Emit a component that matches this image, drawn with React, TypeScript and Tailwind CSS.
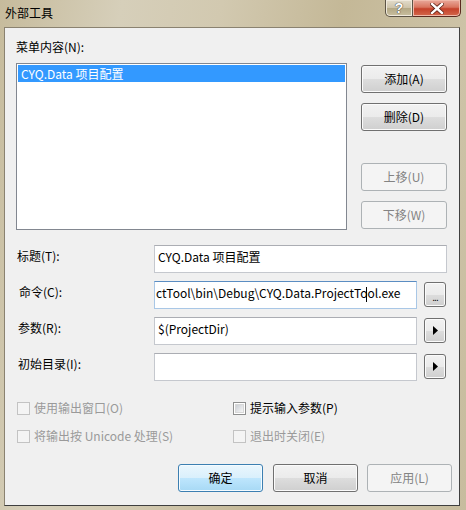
import React from 'react';

const btnBase =
  'h-[28px] rounded-[3px] border text-[12px] leading-[16px] flex items-center justify-center';
const btnNormal =
  'border-[#707070] text-black bg-[linear-gradient(#f2f2f2_0%,#ebebeb_50%,#dddddd_51%,#cfcfcf_100%)] shadow-[inset_0_0_0_1px_#fbfbfb]';
const btnDefault =
  'border-[#3c7fb1] text-black bg-[linear-gradient(#eaf6fd_0%,#d9f0fc_50%,#bee6fd_51%,#a7d9f5_100%)] shadow-[inset_0_0_0_1px_#f4fbff]';
const btnDisabled = 'border-[#adb2b5] text-[#838383] bg-[#f4f4f4]';

const Btn = ({
  label,
  kind = 'normal',
  className = 'w-[86px]',
}: {
  label: string;
  kind?: 'normal' | 'default' | 'disabled';
  className?: string;
}) => (
  <div
    className={`${btnBase} ${kind === 'default' ? btnDefault : kind === 'disabled' ? btnDisabled : btnNormal} ${className}`}
  >
    {label}
  </div>
);

const SmallBtn = ({ children }: { children: React.ReactNode }) => (
  <div className="ml-[7px] mt-[1px] w-[22px] h-[25px] rounded-[3px] border border-[#707070] bg-[linear-gradient(#f2f2f2_0%,#ebebeb_50%,#dddddd_51%,#cfcfcf_100%)] shadow-[inset_0_0_0_1px_#fbfbfb] flex items-center justify-center">
    {children}
  </div>
);

const Arrow = () => (
  <svg width="5" height="9" viewBox="0 0 5 9">
    <path d="M0 0 L5 4.5 L0 9 Z" fill="#000" />
  </svg>
);

const Check = ({ label, disabled }: { label: string; disabled?: boolean }) => (
  <div className="flex items-center h-[16px]">
    <div
      className={`w-[13px] h-[13px] border ${
        disabled ? 'border-[#c3c3c3] bg-[#f4f4f4]' : 'border-[#8e8f8f] bg-white p-px'
      }`}
    >
      {!disabled && (
        <div className="w-full h-full bg-[linear-gradient(135deg,#cbcfd5,#f6f6f6)] border border-[#d7d7d7]" />
      )}
    </div>
    <span className={`ml-[4px] leading-[16px] ${disabled ? 'text-[#9a9a9a]' : 'text-black'}`}>{label}</span>
  </div>
);

const inputCls =
  'h-[28px] bg-white border border-[#c5c8ce] border-t-[#abadb3] pl-[3px] pt-[3px] leading-[16px] whitespace-nowrap overflow-hidden';

export default function App() {
  return (
    <div className="w-[466px] h-[510px] flex flex-col text-[12px] font-['Noto_Sans_CJK_SC','Microsoft_YaHei',sans-serif] bg-[linear-gradient(100deg,#c6bb9c_0%,#d6cfba_22%,#d2c9b0_40%,#c4b897_62%,#cdc3a7_85%,#c7bc9e_100%)]">
      {/* Title bar */}
      <div className="h-[27px] shrink-0 flex items-start">
        <span className="ml-[5px] mt-[5px] leading-[16px] text-black">外部工具</span>
        <div className="ml-auto mr-[5px] flex">
          <div className="w-[28px] h-[17px] rounded-bl-[5px] border border-t-0 border-[#5c5446] bg-[linear-gradient(#e3dccb_0%,#cdc3a9_50%,#b3a885_51%,#c9bf9f_100%)] shadow-[inset_0_0_0_1px_#efe9dc] flex items-center justify-center">
            <span className="text-white font-bold text-[14px] leading-[14px] font-['Liberation_Sans',sans-serif] [text-shadow:0_0_1px_#333,0_0_1px_#333]">?</span>
          </div>
          <div className="w-[48px] h-[17px] rounded-br-[5px] border border-l-0 border-t-0 border-[#5a2a1f] bg-[linear-gradient(#e9a99b_0%,#d9755f_45%,#c5412a_55%,#d3684c_100%)] shadow-[inset_0_0_0_1px_#f0b8a8] flex items-center justify-center">
            <svg width="14" height="11" viewBox="0 0 14 11">
              <path d="M2 1 L12 10 M12 1 L2 10" stroke="#5a1e12" strokeWidth="4" strokeLinecap="square" />
              <path d="M2 1 L12 10 M12 1 L2 10" stroke="#ffffff" strokeWidth="2.4" strokeLinecap="square" />
            </svg>
          </div>
        </div>
      </div>

      {/* Client area */}
      <div className="ml-[4px] w-[456px] h-[479px] border border-[#8a8270] border-r-[#3f3f3f] border-b-[#3f3f3f] bg-[#f0f0f0] flex flex-col text-black">
        {/* List and side buttons */}
        <div className="flex pl-[11px]">
          <div className="w-[331px] flex flex-col">
            <div className="mt-[11px] h-[16px] leading-[16px]">菜单内容(N):</div>
            <div className="mt-[8px] h-[167px] border border-[#828790] bg-white">
              <div className="mt-[1px] mx-[1px] h-[17px] bg-[#3399ff] text-white leading-[17px] pl-[3px]">
                CYQ.Data 项目配置
              </div>
            </div>
          </div>
          <div className="ml-[14px] pt-[37px] flex flex-col">
            <Btn label="添加(A)" />
            <Btn label="删除(D)" className="w-[86px] mt-[10px]" />
            <Btn label="上移(U)" kind="disabled" className="w-[86px] mt-[32px]" />
            <Btn label="下移(W)" kind="disabled" className="w-[86px] mt-[10px]" />
          </div>
        </div>

        {/* Form rows */}
        <div className="mt-[15px] flex flex-col gap-[8px] pl-[12px]">
          <div className="flex items-start h-[28px]">
            <span className="w-[137px] pt-[3px] leading-[16px]">标题(T):</span>
            <div className={`${inputCls} w-[293px]`}>CYQ.Data 项目配置</div>
          </div>
          <div className="flex items-start h-[28px]">
            <span className="w-[137px] pt-[3px] pl-[2px] leading-[16px]">命令(C):</span>
            <div className="h-[28px] w-[263px] bg-white border border-[#a9c7e6] border-t-[#5b8dc2] pl-[1px] pt-[3px] leading-[16px] whitespace-nowrap overflow-hidden">
              ctTool\bin\Debug\CYQ.Data.ProjectTo
              <span className="inline-block w-px h-[15px] bg-black align-middle -mr-px relative -left-[2px]" />
              ol.exe
            </div>
            <SmallBtn>
              <span className="leading-[10px] text-[10px] font-['Liberation_Sans',sans-serif] tracking-[-1px] mt-[6px]">...</span>
            </SmallBtn>
          </div>
          <div className="flex items-start h-[28px]">
            <span className="w-[137px] pt-[3px] pl-[1px] leading-[16px]">参数(R):</span>
            <div className={`${inputCls} w-[263px]`}>$(ProjectDir)</div>
            <SmallBtn>
              <Arrow />
            </SmallBtn>
          </div>
          <div className="flex items-start h-[28px]">
            <span className="w-[137px] pt-[3px] pl-[1px] leading-[16px]">初始目录(I):</span>
            <div className={`${inputCls} w-[263px]`}></div>
            <SmallBtn>
              <Arrow />
            </SmallBtn>
          </div>
        </div>

        {/* Checkboxes */}
        <div className="mt-[19px] pl-[12px] grid grid-cols-[216px_1fr] gap-y-[12px]">
          <Check label="使用输出窗口(O)" disabled />
          <Check label="提示输入参数(P)" />
          <Check label="将输出按 Unicode 处理(S)" disabled />
          <Check label="退出时关闭(E)" disabled />
        </div>

        {/* Dialog buttons */}
        <div className="mt-[20px] pr-[7px] flex justify-end">
          <Btn label="确定" kind="default" className="w-[85px]" />
          <Btn label="取消" className="w-[85px] ml-[10px]" />
          <Btn label="应用(L)" kind="disabled" className="w-[85px] ml-[9px]" />
        </div>
      </div>
    </div>
  );
}
